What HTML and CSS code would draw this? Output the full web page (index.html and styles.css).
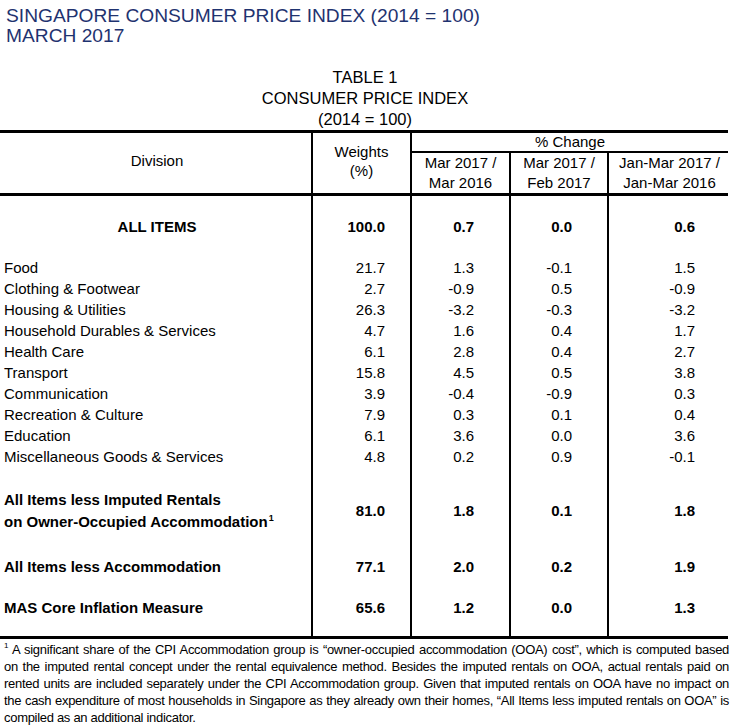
FILE: index.html
```html
<!DOCTYPE html>
<html lang="en">
<head>
<meta charset="utf-8">
<title>Singapore Consumer Price Index</title>
<link rel="stylesheet" href="styles.css">
</head>
<body>
<header class="title">
  <div>SINGAPORE CONSUMER PRICE INDEX (2014 = 100)</div>
  <div>MARCH 2017</div>
</header>
<div class="caption">
  <div>TABLE 1</div>
  <div>CONSUMER PRICE INDEX</div>
  <div>(2014 = 100)</div>
</div>
<div class="cpi">
  <div class="head">
    <div class="h division">Division</div>
    <div class="h weights">Weights<br>(%)</div>
    <div class="h change">% Change</div>
    <div class="h sub s1">Mar 2017 /<br>Mar 2016</div>
    <div class="h sub s2">Mar 2017 /<br>Feb 2017</div>
    <div class="h sub s3">Jan-Mar 2017 /<br>Jan-Mar 2016</div>
  </div>
  <div class="row all bold"><span class="lbl center">ALL ITEMS</span><span>100.0</span><span>0.7</span><span>0.0</span><span>0.6</span></div>
  <div class="row item first"><span class="lbl">Food</span><span>21.7</span><span>1.3</span><span>-0.1</span><span>1.5</span></div>
  <div class="row item"><span class="lbl">Clothing &amp; Footwear</span><span>2.7</span><span>-0.9</span><span>0.5</span><span>-0.9</span></div>
  <div class="row item"><span class="lbl">Housing &amp; Utilities</span><span>26.3</span><span>-3.2</span><span>-0.3</span><span>-3.2</span></div>
  <div class="row item"><span class="lbl">Household Durables &amp; Services</span><span>4.7</span><span>1.6</span><span>0.4</span><span>1.7</span></div>
  <div class="row item"><span class="lbl">Health Care</span><span>6.1</span><span>2.8</span><span>0.4</span><span>2.7</span></div>
  <div class="row item"><span class="lbl">Transport</span><span>15.8</span><span>4.5</span><span>0.5</span><span>3.8</span></div>
  <div class="row item"><span class="lbl">Communication</span><span>3.9</span><span>-0.4</span><span>-0.9</span><span>0.3</span></div>
  <div class="row item"><span class="lbl">Recreation &amp; Culture</span><span>7.9</span><span>0.3</span><span>0.1</span><span>0.4</span></div>
  <div class="row item"><span class="lbl">Education</span><span>6.1</span><span>3.6</span><span>0.0</span><span>3.6</span></div>
  <div class="row item"><span class="lbl">Miscellaneous Goods &amp; Services</span><span>4.8</span><span>0.2</span><span>0.9</span><span>-0.1</span></div>
  <div class="row ooa bold"><span class="lbl">All Items less Imputed Rentals<br>on Owner-Occupied Accommodation<sup class="fn">1</sup></span><span>81.0</span><span>1.8</span><span>0.1</span><span>1.8</span></div>
  <div class="row acc bold"><span class="lbl">All Items less Accommodation</span><span>77.1</span><span>2.0</span><span>0.2</span><span>1.9</span></div>
  <div class="row mas bold"><span class="lbl">MAS Core Inflation Measure</span><span>65.6</span><span>1.2</span><span>0.0</span><span>1.3</span></div>
</div>
<p class="note">
  <span class="ln"><sup class="fn-note">1</sup> A significant share of the CPI Accommodation group is “owner-occupied accommodation (OOA) cost”, which is computed based</span>
  <span class="ln">on the imputed rental concept under the rental equivalence method. Besides the imputed rentals on OOA, actual rentals paid on</span>
  <span class="ln">rented units are included separately under the CPI Accommodation group. Given that imputed rentals on OOA have no impact on</span>
  <span class="ln">the cash expenditure of most households in Singapore as they already own their homes, “All Items less imputed rentals on OOA” is</span>
  <span class="ln last">compiled as an additional indicator.</span>
</p>
</body>
</html>
```

FILE: styles.css
```css
html, body {
  margin: 0;
  padding: 0;
  background: #fff;
}

body {
  font-family: "Liberation Sans", Arial, sans-serif;
  color: #000;
  width: 734px;
}

.title {
  padding: 6px 0 0 6px;
  font-size: 19.2px;
  line-height: 20px;
  color: #1f3370;
}

.caption {
  margin-top: 21px;
  width: 728px;
  text-align: center;
  font-size: 16.5px;
  line-height: 21px;
  padding-left: 2px;
  box-sizing: border-box;
}

.cpi {
  width: 728px;
  border-top: 3px solid #000;
  border-bottom: 3px solid #000;
  font-size: 15px;
  line-height: 21px;
}

.head,
.row {
  display: grid;
  grid-template-columns: 311px 99px 99px 98px 121px;
}

.head {
  grid-template-rows: 20px 43px;
}

.h {
  box-sizing: border-box;
  text-align: center;
}

.division {
  grid-column: 1;
  grid-row: 1 / span 2;
  border-bottom: 3px solid #000;
  display: flex;
  align-items: center;
  justify-content: center;
  padding-left: 3px;
  padding-bottom: 6px;
}

.weights {
  grid-column: 2;
  grid-row: 1 / span 2;
  border-left: 2px solid #000;
  border-bottom: 3px solid #000;
  display: flex;
  align-items: center;
  justify-content: center;
  line-height: 19px;
  padding-bottom: 4px;
}

.change {
  grid-column: 3 / span 3;
  grid-row: 1;
  border-left: 2px solid #000;
  border-bottom: 2px solid #000;
  line-height: 17px;
}

.sub {
  grid-row: 2;
  border-left: 2px solid #000;
  border-bottom: 3px solid #000;
  line-height: 20px;
}

.s1 { grid-column: 3; }
.s2 { grid-column: 4; }
.s3 { grid-column: 5; padding-left: 2px; }

.row > span {
  box-sizing: border-box;
  text-align: right;
}

.row > span + span {
  border-left: 2px solid #000;
}

.row > span:nth-child(2) { padding-right: 25px; }
.row > span:nth-child(3) { padding-right: 35px; }
.row > span:nth-child(4) { padding-right: 35px; }
.row > span:nth-child(5) { padding-right: 33px; }

.row > .lbl {
  text-align: left;
  padding-left: 4px;
}

.row > .lbl.center {
  text-align: center;
  padding-left: 3px;
}

.bold {
  font-weight: bold;
}

.all > span {
  padding-top: 20px;
  padding-bottom: 20px;
}

.ooa > span {
  padding-top: 22px;
  line-height: 21.5px;
  display: flex;
  align-items: center;
  justify-content: flex-end;
}

.ooa > .lbl {
  display: block;
}

.acc > span {
  padding-top: 24px;
}

.mas > span {
  padding-top: 20px;
  padding-bottom: 18px;
}

.fn {
  font-size: 9px;
  line-height: 0;
  vertical-align: 6px;
  margin-left: 1px;
}

.note {
  margin: 2px 0 0 4px;
  width: 725px;
  font-size: 13px;
  line-height: 17px;
  letter-spacing: -0.3px;
}

.ln {
  display: block;
  text-align: justify;
  text-align-last: justify;
}

.ln.last {
  text-align-last: left;
}

.fn-note {
  font-size: 8px;
  line-height: 1;
  vertical-align: top;
  margin-top: 1px;
  display: inline-block;
}
```
